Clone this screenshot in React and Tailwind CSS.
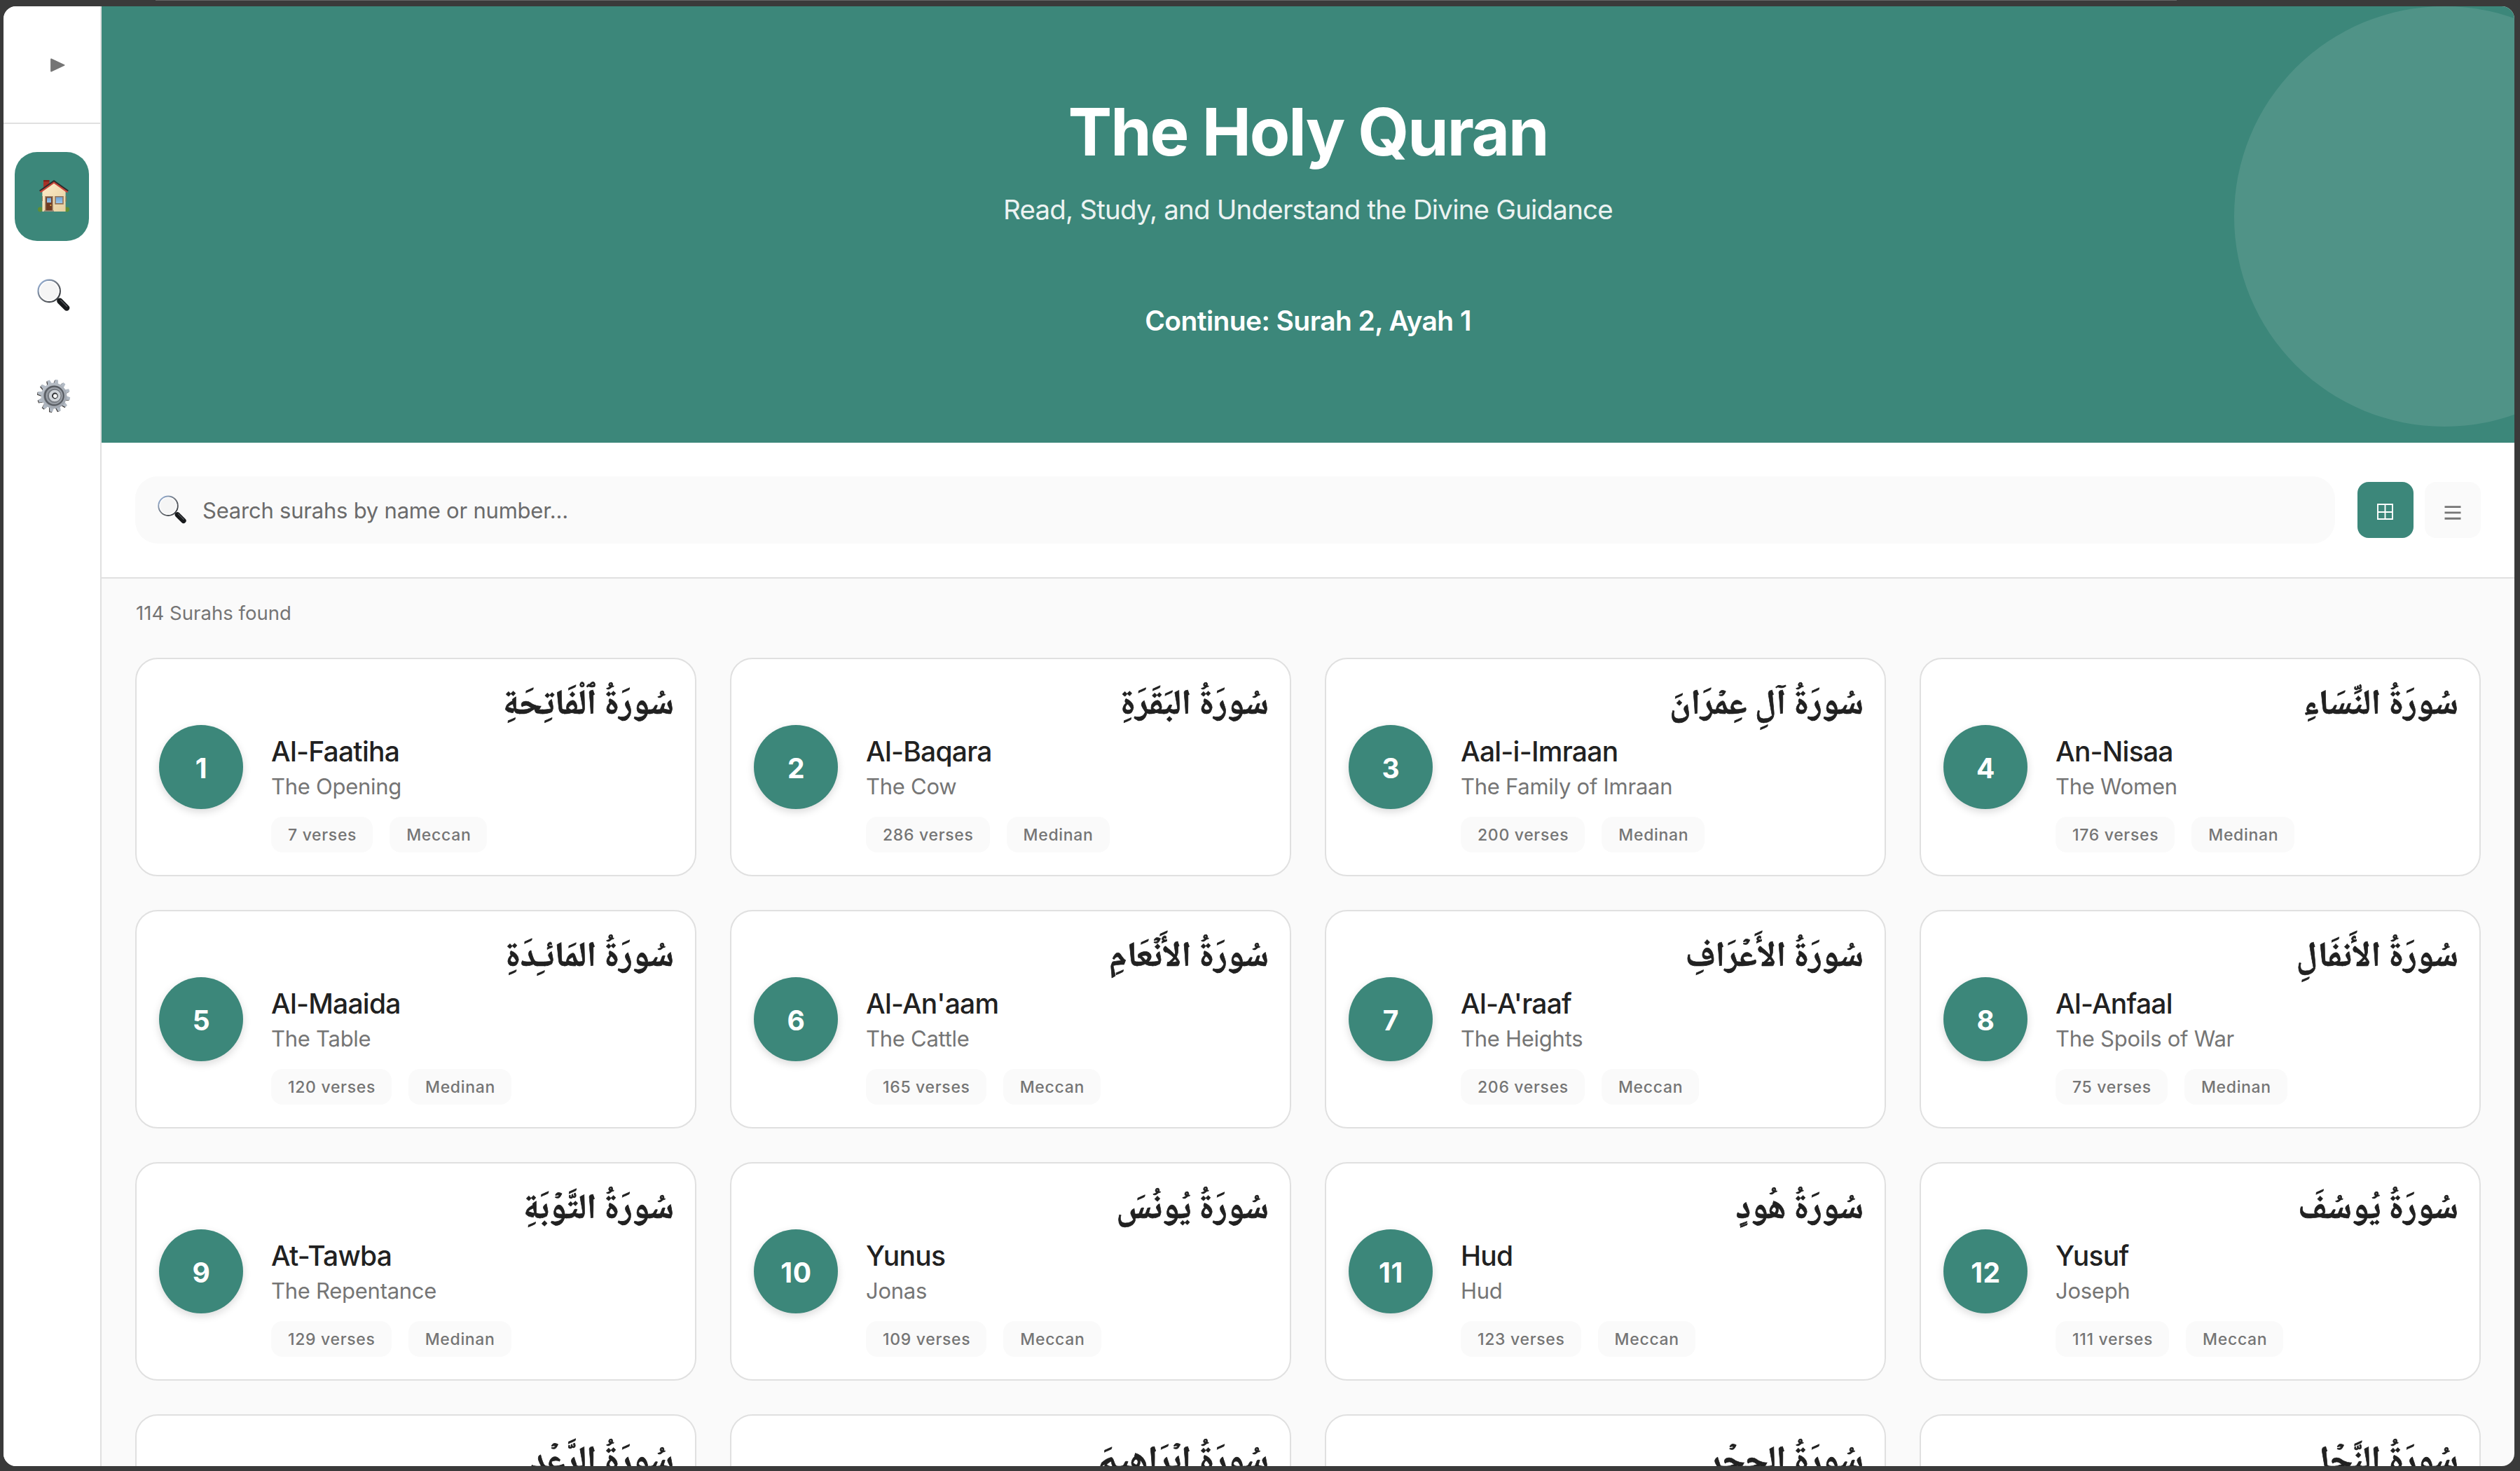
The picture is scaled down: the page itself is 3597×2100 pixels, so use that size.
import React from 'react';

const SURAHS = [
  { n: 1, ar: 'سُورَةُ ٱلْفَاتِحَةِ', name: 'Al-Faatiha', en: 'The Opening', verses: 7, place: 'Meccan' },
  { n: 2, ar: 'سُورَةُ البَقَرَةِ', name: 'Al-Baqara', en: 'The Cow', verses: 286, place: 'Medinan' },
  { n: 3, ar: 'سُورَةُ آلِ عِمۡرَانَ', name: 'Aal-i-Imraan', en: 'The Family of Imraan', verses: 200, place: 'Medinan' },
  { n: 4, ar: 'سُورَةُ النِّسَاءِ', name: 'An-Nisaa', en: 'The Women', verses: 176, place: 'Medinan' },
  { n: 5, ar: 'سُورَةُ المَائـِدَةِ', name: 'Al-Maaida', en: 'The Table', verses: 120, place: 'Medinan' },
  { n: 6, ar: 'سُورَةُ الأَنۡعَامِ', name: "Al-An'aam", en: 'The Cattle', verses: 165, place: 'Meccan' },
  { n: 7, ar: 'سُورَةُ الأَعۡرَافِ', name: "Al-A'raaf", en: 'The Heights', verses: 206, place: 'Meccan' },
  { n: 8, ar: 'سُورَةُ الأَنفَالِ', name: 'Al-Anfaal', en: 'The Spoils of War', verses: 75, place: 'Medinan' },
  { n: 9, ar: 'سُورَةُ التَّوۡبَةِ', name: 'At-Tawba', en: 'The Repentance', verses: 129, place: 'Medinan' },
  { n: 10, ar: 'سُورَةُ يُونُسَ', name: 'Yunus', en: 'Jonas', verses: 109, place: 'Meccan' },
  { n: 11, ar: 'سُورَةُ هُودٍ', name: 'Hud', en: 'Hud', verses: 123, place: 'Meccan' },
  { n: 12, ar: 'سُورَةُ يُوسُفَ', name: 'Yusuf', en: 'Joseph', verses: 111, place: 'Meccan' },
];

// Cards below the fold: only their calligraphic title reaches the viewport.
const UPCOMING = ['سُورَةُ الرَّعۡدِ', 'سُورَةُ إِبۡرَاهِيمَ', 'سُورَةُ الحِجۡرِ', 'سُورَةُ النَّحۡلِ'];

function HouseIcon() {
  return (
    <svg viewBox="0 0 48 48" className="h-12 w-12" aria-hidden="true">
      <defs>
        <linearGradient id="wall" x1="0" y1="0" x2="1" y2="1">
          <stop offset="0" stopColor="#fdecc9" />
          <stop offset="1" stopColor="#e6cf9f" />
        </linearGradient>
        <linearGradient id="glass" x1="0" y1="0" x2="0" y2="1">
          <stop offset="0" stopColor="#6fa3d6" />
          <stop offset="1" stopColor="#9cc6ea" />
        </linearGradient>
      </defs>
      <circle cx="4.4" cy="44" r="3.4" fill="#5f8f35" />
      <circle cx="42.6" cy="44" r="3.4" fill="#5f8f35" />
      <path d="M9 2.2h8.4v12L9 19z" fill="#a83228" />
      <path d="M9 2.2h8.4v2H9z" fill="#7c2119" />
      <path d="M7.4 17.5 24 6.6l16.6 10.9V47H7.4z" fill="url(#wall)" />
      <path d="M7.4 25v7M41.2 25v8" stroke="#8d7350" strokeWidth="1" />
      <path d="M4.4 19.2 24 5.2l19.6 14" fill="none" stroke="#c9473b" strokeWidth="2.8" />
      <path d="M3.6 17.6 24 3.2l20.4 14.4" fill="none" stroke="#2b2b2b" strokeWidth="1.8" />
      <path d="M11.2 25h11.6v21.2H11.2z" fill="#a08468" />
      <path d="M12.6 26.2h8.8v19.6h-8.8z" fill="#6f3a22" />
      <path d="M14 27.4h6v6.8h-6z" fill="url(#glass)" />
      <circle cx="19.4" cy="38" r="1" fill="#f2c14a" />
      <path d="M25.2 25h12.6v11.8H25.2z" fill="#94755a" />
      <path d="M26.8 26.4h9.4v8.6h-9.4z" fill="url(#glass)" />
      <path d="M9.8 45.4H24V47H9.8z" fill="#9b8b7a" />
    </svg>
  );
}

function SearchIcon({ className }) {
  return (
    <svg viewBox="0 0 48 48" className={className} aria-hidden="true">
      <defs>
        <linearGradient id="rim" x1="0" y1="0" x2="1" y2="1">
          <stop offset="0" stopColor="#9dbbe6" />
          <stop offset="0.5" stopColor="#6f747b" />
          <stop offset="1" stopColor="#2d3034" />
        </linearGradient>
      </defs>
      <path d="m28.6 28.4 4 4" stroke="#55595e" strokeWidth="3" />
      <path d="m32.4 31.8 9.8 9.8" stroke="#17191b" strokeWidth="8.4" strokeLinecap="round" />
      <path d="m33.6 30.4 9 9" stroke="#54585d" strokeWidth="1.4" strokeLinecap="round" />
      <circle cx="17.2" cy="17.4" r="15.6" fill="#f5f5f5" stroke="url(#rim)" strokeWidth="2.4" />
      <circle cx="17.2" cy="17.4" r="13.8" fill="none" stroke="#ffffff" strokeWidth="1.4" />
    </svg>
  );
}

const TEETH = [0, 30, 60, 90, 120, 150, 180, 210, 240, 270, 300, 330];

function GearIcon() {
  return (
    <svg viewBox="0 0 48 48" className="h-12 w-12" aria-hidden="true">
      <defs>
        <linearGradient id="steel" x1="0" y1="0" x2="1" y2="1">
          <stop offset="0" stopColor="#bcc3cb" />
          <stop offset="1" stopColor="#9ba1aa" />
        </linearGradient>
      </defs>
      <g fill="#3f3b38" transform="translate(-1 0.8)">
        {TEETH.map((a) => (
          <path key={a} d="M21 7 22 .9h4L27 7z" transform={`rotate(${a + 10} 24 24)`} />
        ))}
      </g>
      <g fill="#b3bbc5">
        {TEETH.map((a) => (
          <path key={a} d="M20.8 7.6 22.1.8h3.8l1.3 6.8z" transform={`rotate(${a + 10} 24 24)`} />
        ))}
      </g>
      <circle cx="24" cy="24" r="18.4" fill="url(#steel)" />
      <circle cx="24" cy="24" r="14.8" fill="#7c8188" />
      <circle cx="24.4" cy="24" r="13.4" fill="none" stroke="#54585e" strokeWidth="1.6" />
      <circle cx="24.6" cy="24" r="11" fill="none" stroke="#a0a5ac" strokeWidth="1.4" />
      <circle cx="25.2" cy="24" r="8.8" fill="#cfd3d8" stroke="#666a70" strokeWidth="0.8" />
      <circle cx="25.4" cy="24" r="4.4" fill="#2f3134" />
      <circle cx="25.8" cy="24.2" r="2.8" fill="#ffffff" />
    </svg>
  );
}

function NavItem({ active, children }) {
  return (
    <button
      className={
        active
          ? 'flex h-[127px] w-[106px] items-center justify-center rounded-[32px] bg-[#3c877a] pb-[3px] pl-[5px]'
          : 'flex h-[127px] w-[106px] items-center justify-center rounded-[32px] pb-[3px] pl-[6px]'
      }
    >
      {children}
    </button>
  );
}

function Sidebar() {
  return (
    <aside className="flex w-[140px] shrink-0 flex-col border-r-2 border-[#e0e0e0] bg-white">
      <div className="flex h-[168px] items-center border-b-2 border-[#e0e0e0] pt-px pl-[66px]">
        <svg viewBox="0 0 22 20" className="h-5 w-[22px]" aria-hidden="true">
          <path d="M2 1.4v17.2L20.6 10z" fill="#757575" stroke="#757575" strokeWidth="1.8" strokeLinejoin="round" />
        </svg>
      </div>
      <nav className="flex flex-col gap-4 px-4 pt-10">
        <NavItem active>
          <HouseIcon />
        </NavItem>
        <NavItem>
          <SearchIcon className="h-12 w-12" />
        </NavItem>
        <NavItem>
          <GearIcon />
        </NavItem>
      </nav>
    </aside>
  );
}

function Hero() {
  return (
    <header className="relative flex h-[623px] shrink-0 flex-col items-center overflow-hidden bg-[#3c877a] pt-[121px] text-white">
      <div className="absolute top-0 -right-[200px] h-[600px] w-[600px] rounded-full bg-white/10" />
      <h1 className="text-[94px] leading-[116px] font-bold tracking-[-2.1px]">The Holy Quran</h1>
      <p className="mt-[25px] text-[38.5px] leading-[56px] tracking-[-0.82px] text-white/90">
        Read, Study, and Understand the Divine Guidance
      </p>
      <button className="mt-[107px] text-[39px] leading-[48px] font-semibold tracking-[-0.6px]">
        Continue: Surah 2, Ayah 1
      </button>
    </header>
  );
}

function Toolbar() {
  return (
    <div className="flex h-[194px] shrink-0 items-center border-b-2 border-[#e0e0e0] bg-white px-12">
      <div className="flex h-24 flex-1 items-center rounded-[32px] bg-[#fafafa] pl-8">
        <SearchIcon className="h-[42px] w-[42px]" />
        <span className="pt-px pl-[22px] text-[31px] leading-[40px] tracking-[-0.22px] text-[#6b6b6b]">
          Search surahs by name or number...
        </span>
      </div>
      <div className="ml-8 flex gap-4">
        <button className="flex h-20 w-20 items-center justify-center rounded-2xl bg-[#3c877a] pt-1 pr-px">
          <svg viewBox="0 0 23 23" className="h-[23px] w-[23px]" aria-hidden="true">
            <path d="M1 1h21v21H1zM11.5 1v21M1 12h21" fill="none" stroke="#ffffff" strokeWidth="1.9" />
          </svg>
        </button>
        <button className="flex h-20 w-20 items-center justify-center rounded-2xl bg-[#fafafa] pt-2">
          <svg viewBox="0 0 24 20" className="h-5 w-6" aria-hidden="true">
            <path d="M.5 1.6h23M.5 9.9h23M.5 18.2h23" stroke="#757575" strokeWidth="2.9" />
          </svg>
        </button>
      </div>
    </div>
  );
}

function Tag({ children }) {
  return (
    <span className="h-[51px] rounded-2xl bg-[#fafafa] pr-[23px] pl-6 text-[23px] leading-[52px] font-medium tracking-[0.68px] text-[#757575]">
      {children}
    </span>
  );
}

function ArabicTitle({ children }) {
  return (
    <p
      dir="rtl"
      className="-mt-[2px] -mr-[2px] h-[76px] font-['Noto_Naskh_Arabic','Noto_Sans_Arabic',serif] text-[50px] leading-[76px] font-bold whitespace-nowrap text-[#212121] [-webkit-text-stroke:0.7px_#212121]"
    >
      {children}
    </p>
  );
}

function SurahCard({ surah }) {
  return (
    <article className="flex h-[312px] items-center gap-10 rounded-[32px] border-2 border-[#e0e0e0] bg-white p-8">
      <div className="flex h-[120px] w-[120px] shrink-0 items-center justify-center rounded-full bg-[#3c877a] pt-[5px] pl-px text-[39px] font-bold tracking-[0.6px] text-white shadow-[0_4px_12px_rgba(0,0,0,0.15)]">
        {surah.n}
      </div>
      <div className="flex h-full flex-1 flex-col">
        <ArabicTitle>{surah.ar}</ArabicTitle>
        <h2 className="mt-[2px] text-[39px] leading-[48px] font-medium tracking-[-0.76px] text-[#212121]">
          {surah.name}
        </h2>
        <p className="mt-[6px] text-[31px] leading-[40px] tracking-[-0.27px] text-[#757575]">{surah.en}</p>
        <div className="mt-[23px] flex gap-6">
          <Tag>{surah.verses} verses</Tag>
          <Tag>{surah.place}</Tag>
        </div>
      </div>
    </article>
  );
}

export default function App() {
  return (
    <div className="flex h-[2100px] w-[3597px] flex-col overflow-hidden bg-[#3a3a3a] font-['Inter',sans-serif]">
      <div className="mr-[490px] ml-[222px] h-px shrink-0 bg-[#666666]" />
      <div className="mt-2 mr-2 ml-[5px] flex h-[2084px] shrink-0 overflow-hidden rounded-[18px] bg-[#fafafa]">
        <Sidebar />
        <main className="flex flex-1 flex-col overflow-hidden">
          <Hero />
          <Toolbar />
          <section className="px-12 pt-8">
            <p className="pl-px text-[27.5px] leading-[34px] tracking-[0.04px] text-[#757575]">114 Surahs found</p>
            <div className="mt-[47px] grid grid-cols-4 gap-12">
              {SURAHS.map((s) => (
                <SurahCard key={s.n} surah={s} />
              ))}
              {UPCOMING.map((title) => (
                <article key={title} className="h-[312px] rounded-[32px] border-2 border-[#e0e0e0] bg-white p-8">
                  <ArabicTitle>{title}</ArabicTitle>
                </article>
              ))}
            </div>
          </section>
        </main>
      </div>
    </div>
  );
}
